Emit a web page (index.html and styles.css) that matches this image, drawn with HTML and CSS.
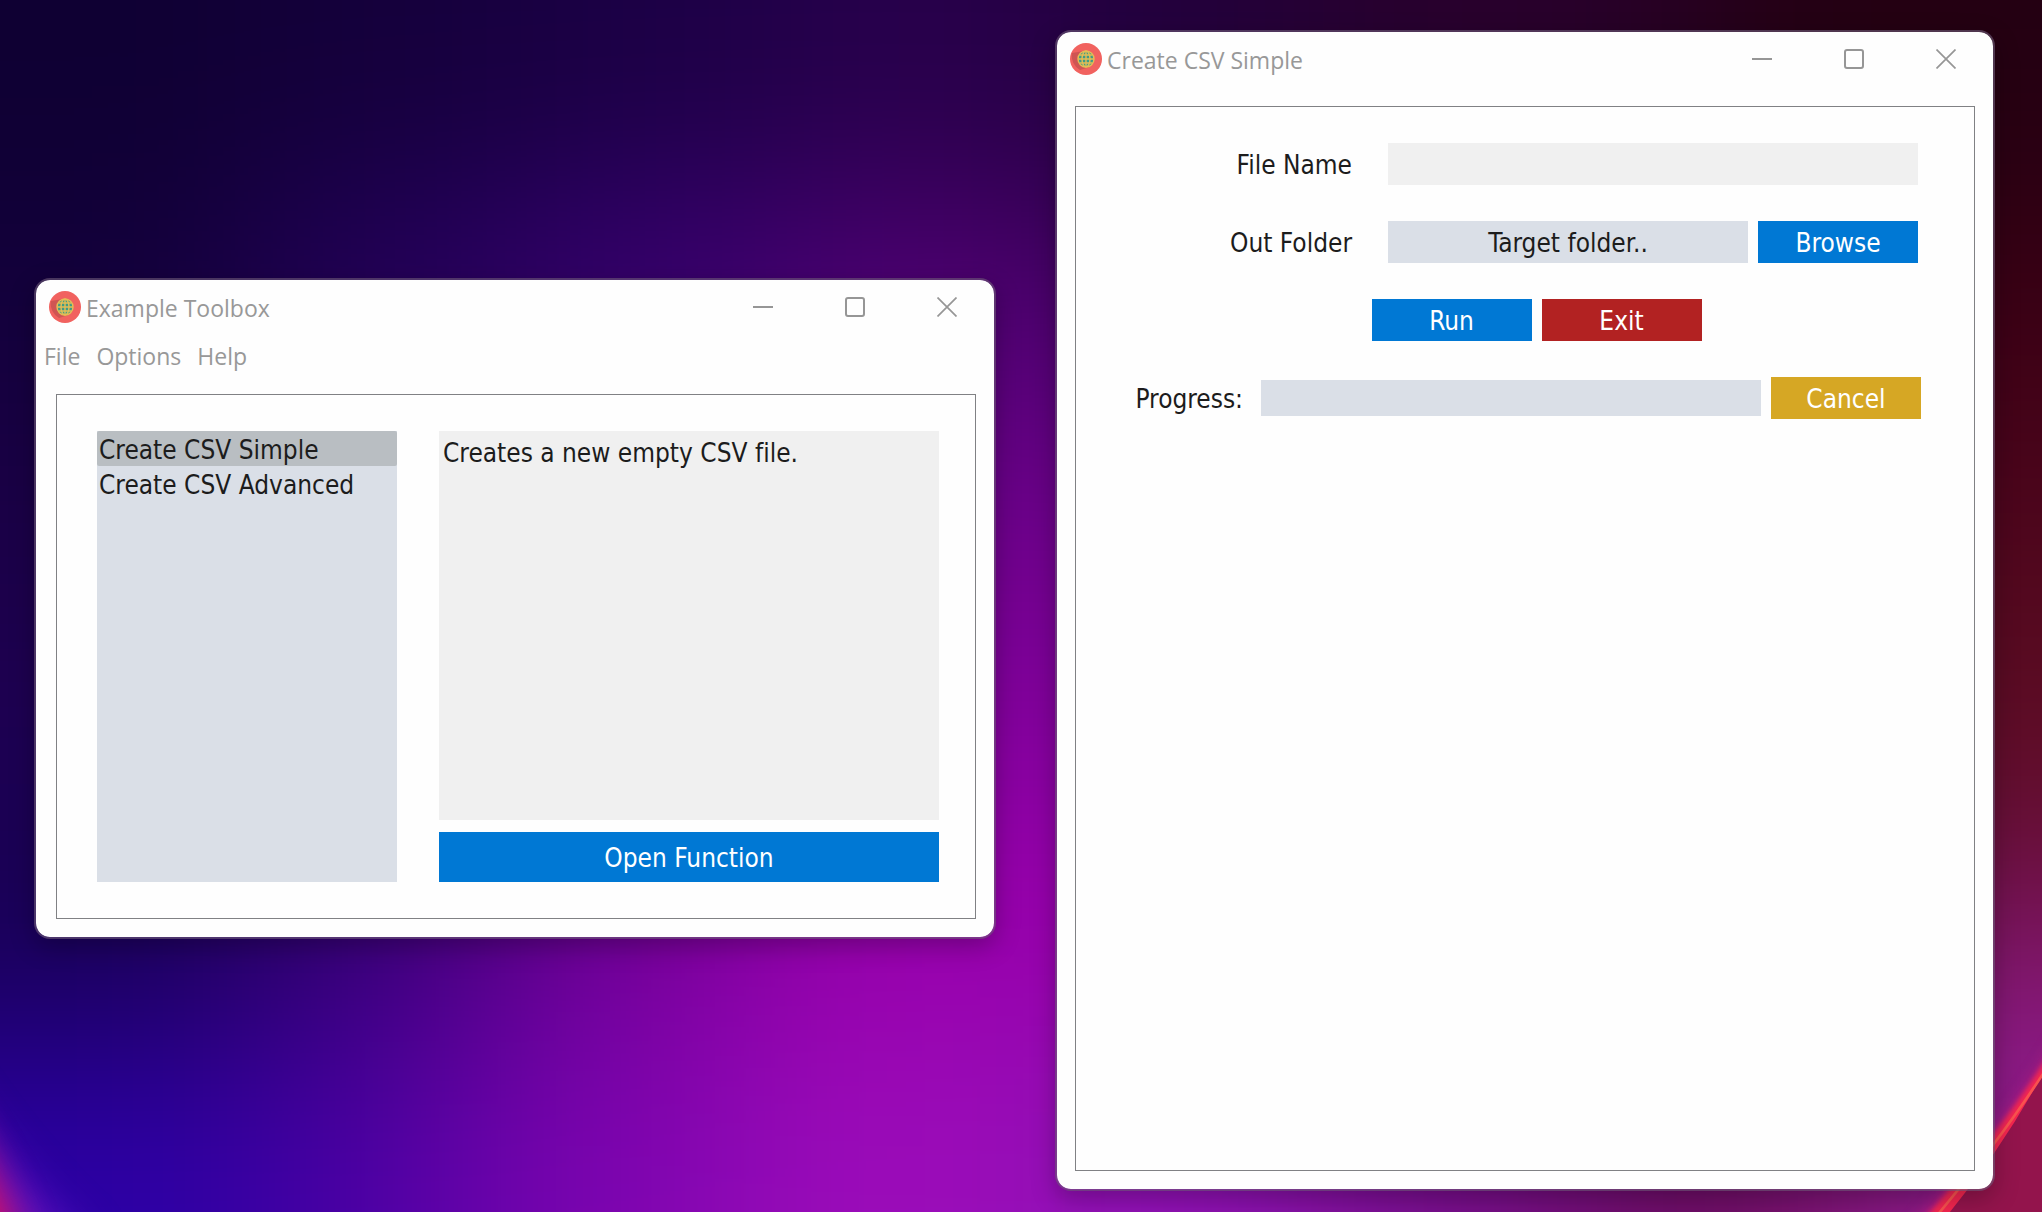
FILE: index.html
```
<!DOCTYPE html>
<html lang="en">
<head>
<meta charset="utf-8">
<meta name="viewport" content="width=device-width, initial-scale=1">
<title>Example Toolbox</title>
<link rel="stylesheet" href="styles.css">
</head>
<body>
<svg width="0" height="0" class="defs" aria-hidden="true">
  <symbol id="app-icon" viewBox="0 0 32 32">
    <circle cx="16" cy="16" r="16" fill="#f1625f"/>
    <path d="M14 8 L2 10 A16 16 0 0 0 10 27 L20 24 Z" fill="#cf5553"/>
    <circle cx="16" cy="16" r="8" fill="#3f9c86"/>
    <g fill="none" stroke="#e5bd55" stroke-width="1.4">
      <circle cx="16" cy="16" r="8"/>
      <ellipse cx="16" cy="16" rx="4" ry="8"/>
      <path d="M16 8v16M8 16h16M9.500 12h13M9.500 20h13"/>
    </g>
  </symbol>
  <symbol id="minimize" viewBox="0 0 20 20"><path d="M0 10h20" stroke="#969696" stroke-width="2"/></symbol>
  <symbol id="maximize" viewBox="0 0 20 20"><rect x="1" y="1" width="18" height="18" rx="2" fill="none" stroke="#969696" stroke-width="2"/></symbol>
  <symbol id="close" viewBox="0 0 20 20"><path d="M.5.5l19 19M19.500.5l-19 19" stroke="#969696" stroke-width="1.700"/></symbol>
</svg>
<div class="desktop">
  <svg class="wallpaper" viewBox="0 0 1568 931" preserveAspectRatio="none" aria-hidden="true">
    <defs>
      <filter id="soft" x="-20%" y="-20%" width="140%" height="140%" color-interpolation-filters="sRGB"><feGaussianBlur stdDeviation="72"/></filter>
      <filter id="glow" x="-50%" y="-50%" width="200%" height="200%" color-interpolation-filters="sRGB"><feGaussianBlur stdDeviation="16"/></filter>
      <filter id="halo" x="-50%" y="-50%" width="200%" height="200%" color-interpolation-filters="sRGB"><feGaussianBlur stdDeviation="7"/></filter>
      <filter id="edge" x="-20%" y="-20%" width="140%" height="140%" color-interpolation-filters="sRGB"><feGaussianBlur stdDeviation="2"/></filter>
    </defs>
    <g filter="url(#soft)">
      <rect x="-300" y="-300" width="2200" height="1600" fill="#280038"/>
      <rect x="-300" y="-300" width="500" height="455" fill="#0f0033"/>
      <rect x="200" y="-300" width="200" height="455" fill="#15003c"/>
      <rect x="400" y="-300" width="200" height="455" fill="#1c0046"/>
      <rect x="600" y="-300" width="200" height="455" fill="#28004c"/>
      <rect x="800" y="-300" width="200" height="455" fill="#22003c"/>
      <rect x="1000" y="-300" width="300" height="455" fill="#28002c"/>
      <rect x="1300" y="-300" width="600" height="455" fill="#240012"/>
      <rect x="-300" y="155" width="500" height="155" fill="#13003c"/>
      <rect x="200" y="155" width="200" height="155" fill="#260060"/>
      <rect x="400" y="155" width="200" height="155" fill="#3c0078"/>
      <rect x="600" y="155" width="200" height="155" fill="#520076"/>
      <rect x="800" y="155" width="300" height="155" fill="#440064"/>
      <rect x="-300" y="310" width="500" height="155" fill="#1a0045"/>
      <rect x="600" y="310" width="400" height="155" fill="#6a0088"/>
      <rect x="-300" y="465" width="500" height="155" fill="#1e0052"/>
      <rect x="600" y="465" width="400" height="155" fill="#80009a"/>
      <rect x="-300" y="620" width="500" height="180" fill="#180054"/>
      <rect x="200" y="620" width="180" height="180" fill="#380078"/>
      <rect x="380" y="620" width="180" height="180" fill="#720098"/>
      <rect x="560" y="620" width="440" height="180" fill="#9800ac"/>
      <rect x="-300" y="800" width="500" height="500" fill="#2c00a6"/>
      <rect x="200" y="800" width="160" height="500" fill="#4c00a4"/>
      <rect x="360" y="800" width="200" height="500" fill="#7c04b0"/>
      <rect x="560" y="800" width="240" height="500" fill="#9c0cba"/>
      <rect x="800" y="800" width="220" height="500" fill="#8e12b4"/>
      <rect x="1020" y="800" width="200" height="500" fill="#780e8c"/>
      <rect x="1220" y="800" width="180" height="500" fill="#6c0c60"/>
      <rect x="1400" y="155" width="500" height="155" fill="#3a0014"/>
      <rect x="1400" y="310" width="500" height="155" fill="#4c051c"/>
      <rect x="1400" y="465" width="500" height="155" fill="#5c0c22"/>
      <rect x="1400" y="620" width="500" height="110" fill="#6c1040"/>
      <rect x="1400" y="730" width="500" height="500" fill="#8c1a88"/>
    </g>
    <path d="M1600 770 Q1555 860 1456 960 L1540 960 L1600 860Z" fill="#de1f7c" filter="url(#halo)"/>
    <path d="M1590 782 Q1550 855 1466 950 L1500 950 L1590 810Z" fill="#f3264f" filter="url(#edge)"/>
    <path d="M1568 826 Q1535 886 1494 935 L1568 935Z" fill="#93144c"/>
    <path d="M1590 790 Q1550 860 1482 940" fill="none" stroke="#f8524f" stroke-width="2"/>
    <path d="M-60 800 Q0 900 70 960 L-60 960Z" fill="#6012c0" filter="url(#glow)"/>
    <path d="M-40 850 Q-6 905 16 960 L-40 960Z" fill="#f0104c" filter="url(#glow)"/>
  </svg>

  <main class="windows">
    <section class="window toolbox" aria-label="Example Toolbox">
      <header class="titlebar">
        <svg class="app-icon" aria-hidden="true"><use href="#app-icon"/></svg>
        <h1 class="title">Example Toolbox</h1>
        <div class="controls">
          <button class="control" type="button" aria-label="Minimize"><svg class="glyph"><use href="#minimize"/></svg></button>
          <button class="control" type="button" aria-label="Maximize"><svg class="glyph"><use href="#maximize"/></svg></button>
          <button class="control" type="button" aria-label="Close"><svg class="glyph"><use href="#close"/></svg></button>
        </div>
      </header>
      <nav class="menubar" aria-label="Menu">
        <button class="menu" type="button">File</button>
        <button class="menu" type="button">Options</button>
        <button class="menu" type="button">Help</button>
      </nav>
      <div class="panel chooser">
        <ul class="functions" role="listbox" aria-label="Functions">
          <li class="function selected" role="option" aria-selected="true">Create CSV Simple</li>
          <li class="function" role="option" aria-selected="false">Create CSV Advanced</li>
        </ul>
        <div class="details">
          <textarea class="description" aria-label="Description" readonly>Creates a new empty CSV file.</textarea>
          <button class="button primary open" type="button">Open Function</button>
        </div>
      </div>
    </section>

    <section class="window dialog" aria-label="Create CSV Simple">
      <header class="titlebar">
        <svg class="app-icon" aria-hidden="true"><use href="#app-icon"/></svg>
        <h1 class="title">Create CSV Simple</h1>
        <div class="controls">
          <button class="control" type="button" aria-label="Minimize"><svg class="glyph"><use href="#minimize"/></svg></button>
          <button class="control" type="button" aria-label="Maximize"><svg class="glyph"><use href="#maximize"/></svg></button>
          <button class="control" type="button" aria-label="Close"><svg class="glyph"><use href="#close"/></svg></button>
        </div>
      </header>
      <form class="panel form">
        <div class="row fields">
          <label class="label" for="file-name">File Name</label>
          <input class="input" id="file-name" type="text">
        </div>
        <div class="row fields">
          <label class="label" for="out-folder">Out Folder</label>
          <input class="input folder" id="out-folder" type="text" value="Target folder.." readonly>
          <button class="button primary" type="button">Browse</button>
        </div>
        <div class="row actions">
          <button class="button primary" type="button">Run</button>
          <button class="button danger" type="button">Exit</button>
        </div>
        <div class="row status">
          <label class="label" for="progress">Progress:</label>
          <progress class="progress" id="progress" value="0" max="100"></progress>
          <button class="button warning" type="button">Cancel</button>
        </div>
      </form>
    </section>
  </main>
</div>
</body>
</html>
```
FILE: styles.css
```
* {
  box-sizing: border-box;
}

body {
  margin: 0;
  color: #1c1c1c;
  font-family: "DejaVu Sans Condensed", "DejaVu Sans", sans-serif;
  font-size: 26px;
  font-variant-ligatures: none;
  line-height: 36px;
}

button,
input,
textarea {
  margin: 0;
  padding: 0;
  border: 0;
  border-radius: 0;
  color: inherit;
  font: inherit;
}

.defs {
  position: absolute;
}

.desktop {
  display: grid;
  min-height: 100vh;
  overflow: hidden;
  background: #22003c;
}

.wallpaper {
  position: absolute;
  width: 100%;
  height: 100%;
}

.windows {
  position: relative;
  display: grid;
  grid-template-columns: 962fr 940fr;
  align-items: start;
  gap: 59px;
  padding: 30px 47px 21px 34px;
}

.window {
  display: flex;
  flex-direction: column;
  border: 2px solid rgba(110, 90, 120, 0.6);
  border-radius: 16px;
  background: #fefefe;
  background-clip: padding-box;
  box-shadow: 0 8px 24px rgba(0, 0, 0, 0.25);
}

.toolbox {
  margin-top: 248px;
}

.dialog {
  align-self: stretch;
}

.titlebar {
  display: flex;
  align-items: center;
  height: 54px;
  padding-right: 1px;
  padding-left: 13px;
}

.app-icon {
  width: 32px;
  height: 32px;
}

.title {
  flex: 1;
  margin: 0 0 0 5px;
  padding-top: 2px;
  color: #989898;
  font: 400 23px/32px "Open Sans", sans-serif;
}

.controls {
  display: flex;
  align-self: stretch;
}

.control {
  display: grid;
  place-items: center;
  width: 92px;
  background: none;
}

.glyph {
  width: 20px;
  height: 20px;
}

.menubar {
  display: flex;
  gap: 16px;
  padding: 6px 8px;
}

.menu {
  background: none;
  color: #989898;
  font: 400 23px/32px "Open Sans", sans-serif;
}

.panel {
  border: 1px solid #808184;
}

.chooser {
  display: grid;
  grid-template-columns: 3fr 5fr;
  gap: 42px;
  margin: 16px 18px 18px 20px;
  padding: 36px 36px 36px 40px;
}

.functions {
  margin: 0;
  padding: 0;
  background: #dadfe7;
  list-style: none;
}

.function {
  height: 35px;
  padding-top: 1px;
  padding-left: 2px;
}

.selected {
  border-radius: 2px;
  background: #b9bec2;
}

.details {
  display: flex;
  flex-direction: column;
  gap: 12px;
}

.description {
  height: 389px;
  padding: 4px;
  background: #f0f0f0;
  resize: none;
}

.button {
  width: 160px;
  height: 42px;
  padding-top: 2px;
  color: #fff;
}

.primary {
  background: #0078d4;
}

.danger {
  background: #b22222;
}

.warning {
  width: 150px;
  background: #d6a724;
}

.open {
  width: 100%;
  height: 50px;
}

.form {
  display: flex;
  flex: 1;
  flex-direction: column;
  gap: 36px;
  margin: 20px 18px 18px;
  padding: 36px 53px;
}

.row {
  display: flex;
  align-items: center;
  gap: 10px;
}

.label {
  padding-top: 2px;
}

.fields {
  padding-right: 3px;
}

.fields .label {
  flex: 1;
  margin-right: 26px;
  text-align: right;
}

.input {
  width: 530px;
  height: 42px;
  background: #f0f0f0;
}

.folder {
  width: 360px;
  padding-top: 2px;
  background: #dadfe7;
  text-align: center;
}

.actions {
  justify-content: center;
  padding-right: 22px;
  padding-left: 45px;
}

.status {
  justify-content: flex-end;
}

.status .label {
  margin-right: 8px;
}

.progress {
  width: 500px;
  height: 36px;
  border: 0;
  background: #dadfe7;
  appearance: none;
}

.progress::-webkit-progress-bar {
  background: #dadfe7;
}

.progress::-webkit-progress-value {
  background: #0078d4;
}
```
